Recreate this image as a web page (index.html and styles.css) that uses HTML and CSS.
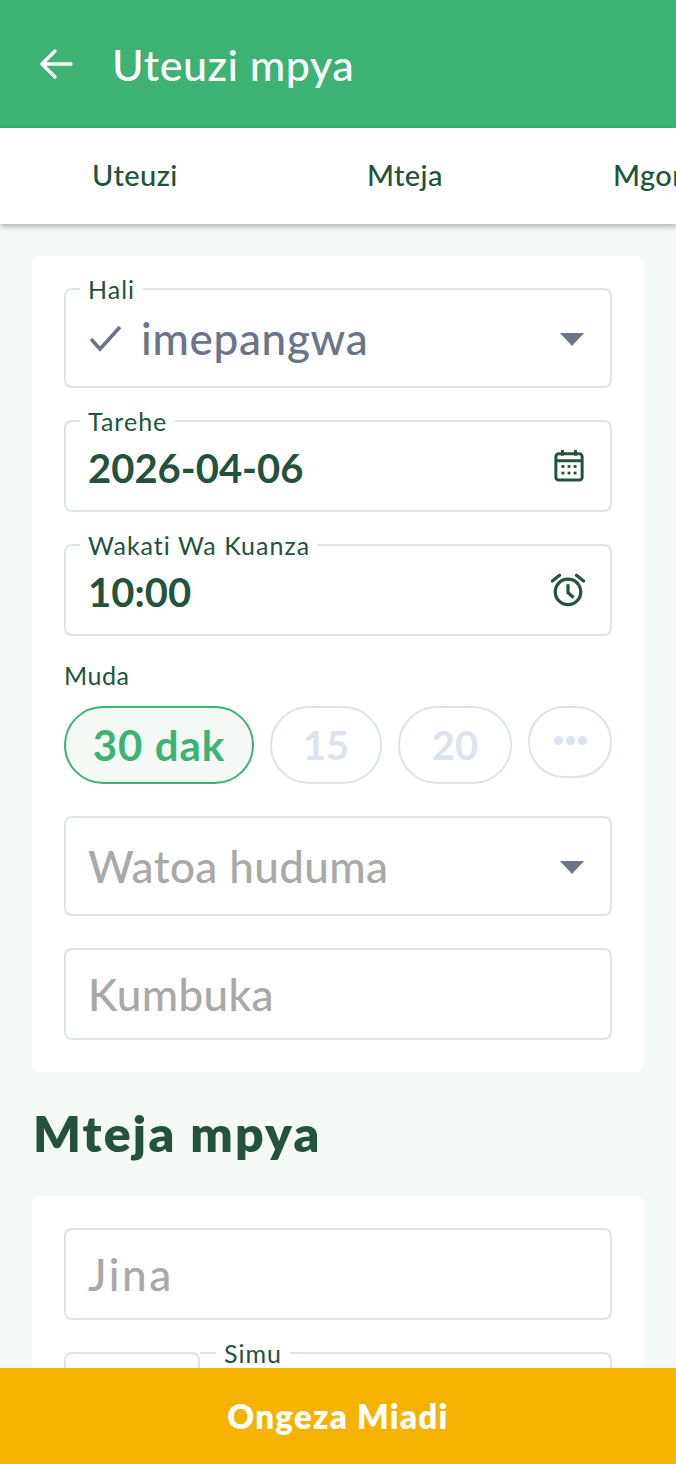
FILE: index.html
```html
<!DOCTYPE html>
<html lang="sw">
<head>
<meta charset="utf-8">
<title>Uteuzi mpya</title>
<link rel="stylesheet" href="styles.css">
</head>
<body>
<div class="app">
  <header class="topbar">
    <svg class="back" viewBox="0 0 36 36" width="36" height="36" aria-hidden="true"><path d="M32 18H3M16 5 3 18l13 13" fill="none" stroke="#fff" stroke-width="3.4" stroke-linecap="round" stroke-linejoin="round"/></svg>
    <h1>Uteuzi mpya</h1>
  </header>
  <nav class="tabs">
    <span class="tab tab-a">Uteuzi</span>
    <span class="tab tab-b">Mteja</span>
    <span class="tab tab-c">Mgonjwa</span>
  </nav>
  <main class="content">
    <section class="card">
      <div class="field tall"><span class="label">Hali</span>
        <svg class="check" viewBox="0 0 36 30" width="36" height="30" aria-hidden="true"><path d="M3 16 12 26 32 4" fill="none" stroke="#6b7489" stroke-width="3.6"/></svg>
        <span class="value muted">imepangwa</span><i class="caret"></i></div>
      <div class="field"><span class="label">Tarehe</span>
        <span class="value strong">2026-04-06</span>
        <svg class="icon" viewBox="0 0 32 36" width="30" height="34" aria-hidden="true"><g fill="none" stroke="#25523d" stroke-width="3.2"><rect x="2" y="5" width="28" height="28" rx="3"/><path d="M2 12.500H30M9 1v6M23 1v6" /></g><g fill="#25523d"><rect x="8" y="17" width="3" height="3"/><rect x="14.500" y="17" width="3" height="3"/><rect x="21" y="17" width="3" height="3"/><rect x="8" y="24" width="3" height="3"/><rect x="14.500" y="24" width="3" height="3"/><rect x="21" y="24" width="3" height="3"/></g></svg></div>
      <div class="field"><span class="label">Wakati Wa Kuanza</span>
        <span class="value strong">10:00</span>
        <svg class="icon alarm" viewBox="0 0 36 36" width="34" height="34" aria-hidden="true"><g fill="none" stroke="#25523d" stroke-width="3.4"><circle cx="18" cy="20" r="13.500"/><path d="M18 12v9l6 5" /><path d="M1.500 8.500 9 2.500M34.500 8.500 27 2.500" stroke-linecap="round"/></g></svg></div>
      <div class="duration">
        <span class="plain-label">Muda</span>
        <div class="chips">
          <span class="chip active">30 dak</span>
          <span class="chip w15">15</span>
          <span class="chip w20">20</span>
          <span class="chip more"><i></i><i></i><i></i></span>
        </div>
      </div>
      <div class="field tall"><span class="value holder">Watoa huduma</span><i class="caret"></i></div>
      <div class="field"><span class="value holder">Kumbuka</span></div>
    </section>
    <h2>Mteja mpya</h2>
    <section class="card">
      <div class="field"><span class="value holder jina">Jina</span></div>
      <div class="phone">
        <div class="field code"></div>
        <div class="field number"><span class="label">Simu</span></div>
      </div>
    </section>
  </main>
  <footer class="action">Ongeza Miadi</footer>
</div>
</body>
</html>
```
FILE: styles.css
```css
* { box-sizing: border-box; }
html, body { margin: 0; padding: 0; }
body { font-family: "Lato", "Noto Sans", sans-serif; color: #25523d; background: #f5f9f6; }
.app { width: 676px; height: 1464px; display: flex; flex-direction: column; overflow: hidden; }
.topbar { flex: 0 0 128px; background: #3cb275; display: flex; align-items: center; padding-left: 39px; gap: 38px; color: #fff; }
.back { flex: none; }
h1 { margin: 0; font-size: 43px; font-weight: 500; line-height: 1; letter-spacing: .5px; margin-left: -1px; }
.tabs { flex: 0 0 96px; background: #fff; display: flex; align-items: center; box-shadow: 0 2px 6px rgba(40,50,45,.4); position: relative; z-index: 1; white-space: nowrap; overflow: hidden; padding: 0 0 4px 92px; font-size: 29px; font-weight: 500; letter-spacing: .4px; }
.tab { flex: none; }
.tab-a { width: 275px; }
.tab-b { width: 246px; }
.content { flex: 1; min-height: 0; overflow: hidden; padding: 32px 32px 0; }
.card { background: #fff; border-radius: 8px; padding: 32px; display: flex; flex-direction: column; gap: 32px; }
.field { position: relative; height: 92px; border: 2px solid #dbe3ee; border-radius: 8px; display: flex; align-items: center; padding: 0 26px 0 22px; }
.tall { height: 100px; }
.label { position: absolute; left: 14px; top: -14px; background: #fff; padding: 0 8px; font-size: 25px; line-height: 26px; letter-spacing: 1px; }
.value { font-size: 44px; line-height: 1; }
.strong { font-size: 40px; font-weight: 700; padding-top: 4px; }
.muted { color: #6b7489; font-weight: 500; margin-left: 17px; letter-spacing: .7px; }
.holder { color: #a9a9a9; font-weight: 500; letter-spacing: .4px; }
.jina { letter-spacing: 2.5px; }
.check { flex: none; }
.caret { margin-left: auto; width: 0; height: 0; border-left: 12px solid transparent; border-right: 12px solid transparent; border-top: 13px solid #6b7489; margin-top: 2px; }
.icon { margin-left: auto; flex: none; }
.alarm { margin-right: -1px; }
.duration { display: flex; flex-direction: column; margin-top: -6px; }
.plain-label { font-size: 25px; line-height: 26px; margin-bottom: 18px; letter-spacing: .5px; }
.chips { display: flex; gap: 16px; align-items: flex-start; }
.chip { height: 78px; border: 2px solid #dbe3ee; border-radius: 39px; display: flex; align-items: center; justify-content: center; font-size: 40px; font-weight: 700; color: #dbe3ee; }
.active { width: 190px; border-color: #3cb275; background: #f5f9f6; color: #3cb275; font-size: 42px; letter-spacing: 1px; }
.w15 { width: 112px; }
.w20 { width: 114px; }
.more { width: 84px; height: 72px; gap: 3px; padding-bottom: 4px; }
.more i { width: 9px; height: 9px; border-radius: 50%; background: #dbe3ee; }
h2 { margin: 29px 0 31px 1px; font-size: 50px; line-height: 64px; font-weight: 800; letter-spacing: 2.2px; }
.phone { display: flex; }
.code { width: 136px; flex: none; }
.number { flex: 1; border-left: 0; border-radius: 0 8px 8px 0; }
.number .label { left: 16px; }
.action { flex: 0 0 96px; background: #f5b200; color: #fff; display: flex; align-items: center; justify-content: center; font-size: 33px; font-weight: 800; position: relative; z-index: 2; letter-spacing: 1.3px; }
```
